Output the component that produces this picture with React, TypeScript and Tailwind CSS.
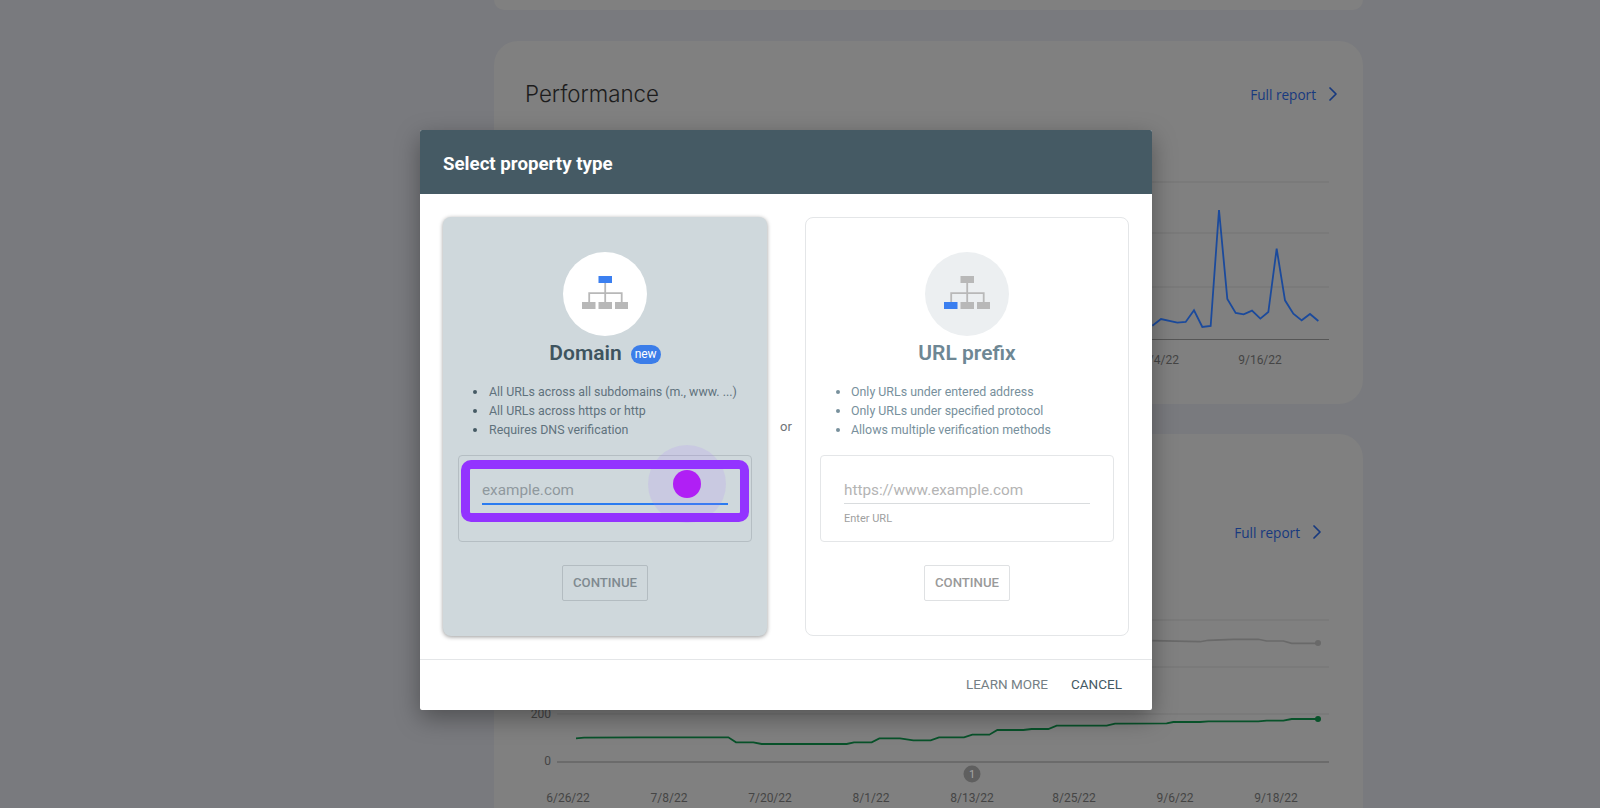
import { ChevronRight } from "lucide-react";

const topChart = [
  [97, 467], [123, 447], [172, 458], [197, 456], [222, 421], [247, 471], [272, 468], [297, 120], [322, 387], [347, 429],
  [371, 433], [396, 422], [421, 446], [445, 426], [470, 236], [495, 391], [520, 431], [545, 451], [570, 432], [595, 453],
].map(([x, y]) => `${1120 + x / 3},${170 + y / 3}`).join(" ");

const greenLeft = [
  [288, 295], [312, 293], [480, 292], [745, 292], [768, 307], [820, 307], [845, 312], [1100, 312], [1122, 307], [1175, 307], [1198, 295], [1260, 295],
].map(([x, y]) => `${480 + x / 3},${640 + y / 3}`);

const greenRight = [
  [0, 445], [40, 451], [92, 451], [117, 442], [192, 442], [217, 434], [268, 434], [292, 420], [370, 420], [395, 417], [445, 417],
  [470, 407], [620, 407], [645, 401], [800, 400], [820, 396], [900, 396], [925, 394], [1075, 394], [1100, 392], [1150, 392], [1175, 387], [1254, 387],
].map(([x, y]) => `${900 + x / 3},${590 + y / 3}`);

const grey = [
  [757, 152], [900, 155], [925, 151], [1000, 148], [1075, 148], [1100, 153], [1150, 153], [1175, 160], [1254, 160],
].map(([x, y]) => `${900 + x / 3},${590 + y / 3}`).join(" ");

const dates = [
  ["6/26/22", 568], ["7/8/22", 669], ["7/20/22", 770], ["8/1/22", 871], ["8/13/22", 972], ["8/25/22", 1074], ["9/6/22", 1175], ["9/18/22", 1276],
] as const;

const FullReport = ({ className }: { className: string }) => (
  <div className={`flex items-center justify-end gap-[5px] font-['Open_Sans',sans-serif] text-[13.6px] font-medium text-[#17397f] ${className}`}>
    <span className="mt-[2px]">Full report</span>
    <ChevronRight size={24} strokeWidth={1.75} />
  </div>
);

const SiteTree = ({ top, left }: { top: string; left: string }) => (
  <svg className="mb-[4px]" width="46" height="33" viewBox="0 0 46 33">
    <path d="M23.2 7V26M7.2 26V17.2H39.7V26" fill="none" stroke="#b8b8b8" strokeWidth="1.8" />
    <rect x="16.5" width="13.5" height="7" fill={top} />
    <rect y="26" width="13.5" height="7" fill={left} />
    <rect x="16.5" y="26" width="13.5" height="7" fill="#b8b8b8" />
    <rect x="33" y="26" width="13" height="7" fill="#b8b8b8" />
  </svg>
);

const Spot = () => (
  <>
    <div className="absolute left-[189px] top-[-11px] h-[78px] w-[78px] rounded-full bg-[#a87cff]/15" />
    <div className="absolute left-[2px] top-[4px] h-[62px] w-[288px] rounded-[10px] border-[9px] border-[#9333ff]" />
    <div className="absolute left-[214px] top-[14px] h-[28px] w-[28px] rounded-full bg-[#b01ff5]" />
  </>
);

const App = () => {
  return (
    <div className="relative h-[808px] overflow-hidden bg-[#797a7e] font-['Roboto',sans-serif]">
      <div className="ml-[494px] flex h-full w-[869px] flex-col">
        <div className="h-[10px] rounded-b-[20px] bg-[#808080]" />

        <section className="mt-[31px] h-[363px] rounded-[24px] bg-[#808080]">
          <div className="flex h-[106px] items-center justify-between pl-[31px] pr-[18px]">
            <h2 className="font-['Inter',sans-serif] text-[22.3px] font-light text-[#1c1c1c]">Performance</h2>
            <FullReport className="" />
          </div>
          <svg className="block" width="869" height="256" viewBox="494 147 869 256">
            <path d="M1152 182H1329M1152 233H1329M1152 287H1329" stroke="#747474" fill="none" />
            <path d="M1152 339.5H1329" stroke="#565656" fill="none" />
            <polyline points={topChart} fill="none" stroke="#1b4a9c" strokeWidth="1.8" />
            <text x="1179" y="363.5" textAnchor="end" className="fill-[#454545] font-['Roboto',sans-serif] text-[12px]">9/4/22</text>
            <text x="1260" y="363.5" textAnchor="middle" className="fill-[#454545] font-['Roboto',sans-serif] text-[12px]">9/16/22</text>
          </svg>
        </section>

        <section className="mt-[30px] flex-1 rounded-t-[24px] bg-[#808080]">
          <div className="pb-[16px] pr-[34px] pt-[83px]">
            <FullReport className="h-[30px]" />
          </div>
          <svg className="block" width="869" height="245" viewBox="494 563 869 245">
            <path d="M557 620H1329M557 667H1329M557 714H1329" stroke="#747474" fill="none" />
            <path d="M557 762H1329" stroke="#565656" fill="none" />
            <polyline points={grey} fill="none" stroke="#696969" strokeWidth="1.6" />
            <circle cx="1318" cy="643" r="3" fill="#696969" />
            <polyline points={[...greenLeft, ...greenRight].join(" ")} fill="none" stroke="#08522a" strokeWidth="1.8" />
            <circle cx="1318" cy="719" r="3" fill="#08522a" />
            <text x="551" y="718" textAnchor="end" className="fill-[#454545] font-['Roboto',sans-serif] text-[12px]">200</text>
            <text x="551" y="765" textAnchor="end" className="fill-[#454545] font-['Roboto',sans-serif] text-[12px]">0</text>
            {dates.map(([label, x]) => (
              <text key={label} x={x} y="802" textAnchor="middle" className="fill-[#454545] font-['Roboto',sans-serif] text-[12px]">{label}</text>
            ))}
            <circle cx="972" cy="774" r="8.5" fill="#5f5f5f" />
            <text x="972" y="778" textAnchor="middle" className="fill-[#a5a5a5] font-['Roboto',sans-serif] text-[11px]">1</text>
          </svg>
        </section>
      </div>

      {/* dialog */}
      <div className="absolute left-[420px] top-[130px] flex h-[580px] w-[732px] flex-col rounded-[2px] bg-white shadow-[0_8px_24px_rgba(0,0,0,0.35)]">
        <div className="flex h-[64px] items-center rounded-t-[2px] bg-[#455a64] px-[23px] pt-[4px] text-[18.7px] font-bold text-white">
          Select property type
        </div>

        <div className="flex flex-1 items-start px-[23px] pt-[23px]">
          {/* domain */}
          <div className="flex h-[419px] w-[324px] flex-col items-center rounded-lg bg-[#cfd8dc] pt-[35px] shadow-[0_1px_4px_rgba(0,0,0,0.4)]">
            <div className="flex h-[84px] w-[84px] items-center justify-center rounded-full bg-white">
              <SiteTree top="#3b7ff0" left="#b8b8b8" />
            </div>
            <div className="mt-[6px] flex h-[24px] items-center gap-[9px]">
              <h3 className="text-[21px] font-semibold text-[#3e545f]">Domain</h3>
              <span className="flex h-[19px] w-[30px] items-center justify-center rounded-full bg-[#3b7de9] text-[12px] text-white">new</span>
            </div>
            <ul className="mt-[16px] w-full pl-[30px] text-[12.4px] leading-[19px] text-[#5f727c]">
              <li className="flex items-center gap-[12px]"><span className="h-[4px] w-[4px] rounded-full bg-[#455a64]" />All URLs across all subdomains (m., www. ...)</li>
              <li className="flex items-center gap-[12px]"><span className="h-[4px] w-[4px] rounded-full bg-[#455a64]" />All URLs across https or http</li>
              <li className="flex items-center gap-[12px]"><span className="h-[4px] w-[4px] rounded-full bg-[#455a64]" />Requires DNS verification</li>
            </ul>
            <div className="relative mt-[16px] h-[87px] w-[294px] rounded-[4px] border border-[#b5bec3] px-[23px] pt-[24px]">
              <div className="h-[25px] border-b-2 border-[#2a7bf0] text-[15.3px] leading-[20px] text-[#8f999e]">example.com</div>
              <div className="mt-[7px] text-[11px] leading-[14px] text-[#4a555a]">Enter domain or subdomain</div>
              <Spot />
            </div>
            <button className="mt-[23px] flex h-[36px] w-[86px] items-center justify-center rounded-[2px] border border-[#b3bcc1] text-[13.2px] font-medium text-[#7f8a90]">CONTINUE</button>
          </div>

          <div className="flex h-[419px] w-[38px] items-center justify-center text-[13px] text-[#6f7478]">or</div>

          {/* url prefix */}
          <div className="flex h-[419px] w-[324px] flex-col items-center rounded-lg border border-[#e4e6e8] pt-[34px]">
            <div className="flex h-[84px] w-[84px] items-center justify-center rounded-full bg-[#eceff1]">
              <SiteTree top="#b8b8b8" left="#3b7ff0" />
            </div>
            <div className="mt-[6px] flex h-[24px] items-center">
              <h3 className="text-[21px] font-semibold text-[#6e8794]">URL prefix</h3>
            </div>
            <ul className="mt-[16px] w-full pl-[30px] text-[12.4px] leading-[19px] text-[#78909c]">
              <li className="flex items-center gap-[11px]"><span className="h-[4px] w-[4px] rounded-full bg-[#78909c]" />Only URLs under entered address</li>
              <li className="flex items-center gap-[11px]"><span className="h-[4px] w-[4px] rounded-full bg-[#78909c]" />Only URLs under specified protocol</li>
              <li className="flex items-center gap-[11px]"><span className="h-[4px] w-[4px] rounded-full bg-[#78909c]" />Allows multiple verification methods</li>
            </ul>
            <div className="mt-[16px] h-[87px] w-[294px] rounded-[4px] border border-[#e4e6e8] px-[23px] pt-[24px]">
              <div className="h-[24px] border-b border-[#d9dcde] text-[15.3px] leading-[20px] text-[#b4b4b4]">https://www.example.com</div>
              <div className="mt-[8px] text-[11px] leading-[14px] text-[#a0a0a0]">Enter URL</div>
            </div>
            <button className="mt-[23px] flex h-[36px] w-[86px] items-center justify-center rounded-[2px] border border-[#dfe1e3] text-[13.2px] font-medium text-[#9a9a9a]">CONTINUE</button>
          </div>
        </div>

        <div className="flex h-[51px] items-center justify-end gap-[23px] border-t border-[#e4e6e8] pb-[2px] pr-[30px] text-[13.5px]">
          <span className="text-[#757f85]">LEARN MORE</span>
          <span className="text-[#455a64]">CANCEL</span>
        </div>
      </div>
    </div>
  );
};

export default App;
